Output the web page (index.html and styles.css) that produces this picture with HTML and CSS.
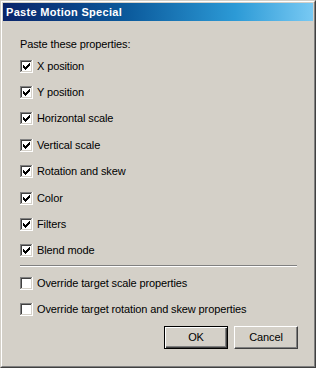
FILE: index.html
```
<!DOCTYPE html>
<html>
<head>
<meta charset="utf-8">
<link rel="stylesheet" href="styles.css">
</head>
<body>
<svg class="defs" width="0" height="0" aria-hidden="true">
  <symbol id="cb" viewBox="0 0 13 13">
    <rect x="0" y="0" width="13" height="13" fill="#ffffff"/>
    <rect x="0" y="0" width="12" height="12" fill="#808080"/>
    <rect x="1" y="1" width="11" height="11" fill="#d4d0c8"/>
    <rect x="1" y="1" width="10" height="10" fill="#404040"/>
    <rect x="2" y="2" width="9" height="9" fill="#ffffff"/>
  </symbol>
  <symbol id="cbc" viewBox="0 0 13 13">
    <use href="#cb"/>
    <path d="M3 5v3h1v1h1v1h1v-1h1v-1h1v-1h1v-1h1v-3h-1v1h-1v1h-1v1h-1v1h-1v-1h-1v-1h-1z" fill="#000000"/>
  </symbol>
</svg>
<div class="window">
  <div class="frame">
    <div class="titlebar">Paste Motion Special</div>
    <div class="content">
      <div class="heading">Paste these properties:</div>
      <div class="group">
        <div class="row"><svg class="box" width="13" height="13"><use href="#cbc"/></svg><span>X position</span></div>
        <div class="row"><svg class="box" width="13" height="13"><use href="#cbc"/></svg><span>Y position</span></div>
        <div class="row"><svg class="box" width="13" height="13"><use href="#cbc"/></svg><span>Horizontal scale</span></div>
        <div class="row"><svg class="box" width="13" height="13"><use href="#cbc"/></svg><span>Vertical scale</span></div>
        <div class="row"><svg class="box" width="13" height="13"><use href="#cbc"/></svg><span>Rotation and skew</span></div>
        <div class="row"><svg class="box" width="13" height="13"><use href="#cbc"/></svg><span>Color</span></div>
        <div class="row"><svg class="box" width="13" height="13"><use href="#cbc"/></svg><span>Filters</span></div>
        <div class="row"><svg class="box" width="13" height="13"><use href="#cbc"/></svg><span>Blend mode</span></div>
      </div>
      <div class="sep"></div>
      <div class="group2">
        <div class="row2"><svg class="box" width="13" height="13"><use href="#cb"/></svg><span>Override target scale properties</span></div>
        <div class="row2"><svg class="box" width="13" height="13"><use href="#cb"/></svg><span>Override target rotation and skew properties</span></div>
      </div>
      <div class="buttons">
        <div class="btn default">OK</div>
        <div class="btn">Cancel</div>
      </div>
    </div>
  </div>
</div>
</body>
</html>
```
FILE: styles.css
```
html, body {
  margin: 0;
  padding: 0;
  background: #d4d0c8;
}
.defs {
  position: absolute;
  width: 0;
  height: 0;
  overflow: hidden;
}
.window {
  width: 316px;
  height: 368px;
  box-sizing: border-box;
  border: 1px solid;
  border-color: #d4d0c8 #404040 #404040 #d4d0c8;
  font-family: "Liberation Sans", Arial, sans-serif;
  font-size: 11px;
  letter-spacing: -0.12px;
  color: #000;
}
.frame {
  height: 100%;
  box-sizing: border-box;
  border: 1px solid;
  border-color: #ffffff #808080 #808080 #ffffff;
  padding: 1px;
  background: #d4d0c8;
  display: flex;
  flex-direction: column;
}
.titlebar {
  height: 18px;
  line-height: 18px;
  padding-left: 3px;
  font-weight: bold;
  font-size: 11px;
  letter-spacing: 0.3px;
  color: #fff;
  background: linear-gradient(to right, #0a246a 0%, #0b5a9c 40%, #2c9ad6 75%, #78c9f3 100%);
  white-space: nowrap;
}
.content {
  margin-top: 1px;
  padding: 16px 15px 0 17px;
}
.heading {
  height: 13px;
  line-height: 13px;
}
.group {
  margin-top: 2px;
}
.row, .row2 {
  display: flex;
  align-items: center;
  height: 26.4px;
  line-height: 13px;
  white-space: nowrap;
}
.row2 {
  height: 26px;
}
.box {
  flex: none;
  width: 13px;
  height: 13px;
  margin-right: 4px;
  shape-rendering: crispEdges;
}
.sep {
  margin-top: 1px;
  height: 0;
  border-top: 1px solid #808080;
  border-bottom: 1px solid #ffffff;
  margin-right: 1px;
}
.group2 {
  margin-top: 3px;
}
.buttons {
  margin-top: 4px;
  display: flex;
  justify-content: flex-end;
  gap: 6px;
}
.btn {
  width: 64px;
  height: 23px;
  box-sizing: border-box;
  border: 1px solid;
  border-color: #ffffff #404040 #404040 #ffffff;
  box-shadow: inset -1px -1px #808080, inset 1px 1px #d4d0c8;
  display: flex;
  align-items: center;
  justify-content: center;
  line-height: 13px;
}
.btn.default {
  border-color: #000;
  box-shadow: inset 1px 1px #ffffff, inset -1px -1px #404040, inset -2px -2px #808080;
}
```
